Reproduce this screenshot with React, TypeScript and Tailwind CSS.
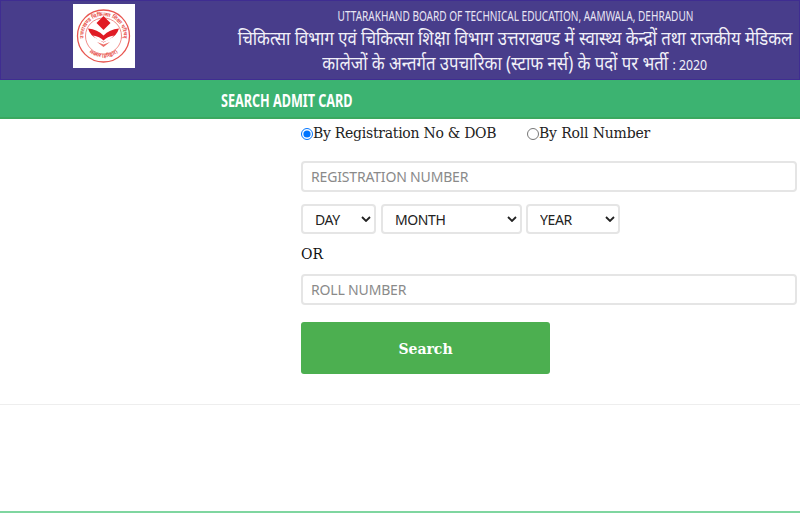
export default function App() {
  const serif = "font-['DejaVu_Serif',serif]";
  return (
    <div className="w-[800px] h-[517px] overflow-hidden bg-white font-['Noto_Sans',sans-serif]">
      <header className="h-[80px] flex bg-[#483d8b] border border-[#3f2d91] pl-[72px]">
        <div className="w-[62px] h-[64px] mt-[3px] bg-white shrink-0 flex items-center justify-center">
          <svg viewBox="0 0 62 64" className="w-[62px] h-[64px]">
            <circle cx="30.5" cy="32" r="26" fill="none" stroke="#e8554f" strokeWidth="1.3" />
            <circle cx="30.5" cy="32" r="18" fill="none" stroke="#ec6f69" strokeWidth="0.8" />
            <defs>
              <path id="logo-top" d="M14.100 43.500A20 20 0 1 1 46.900 43.500" />
              <path id="logo-bottom" d="M15 47a22 22 0 0 0 31 0" />
            </defs>
            <text fontSize="5.200" fill="#e8554f" fontWeight="700" textAnchor="middle">
              <textPath href="#logo-top" startOffset="50%">उत्तराखण्ड चिकित्सा शिक्षा परिषद्</textPath>
            </text>
            <text fontSize="5" fill="#e8554f" fontWeight="700" textAnchor="middle">
              <textPath href="#logo-bottom" startOffset="50%">लक्सर (हरिद्वार)</textPath>
            </text>
            <path d="M30.5 12l7 7-7 7-7-7z" fill="#e01b24" />
            <path d="M15 24.500c6.500 .5 11.500 3 15.500 7 4-4 9-6.500 15.500-7-1.500 5-5 8.500-9.500 10.500l-6 3.500-6-3.500c-4.500-2-8-5.500-9.500-10.500z" fill="#e01b24" />
            <path d="M20 31.500c4.500 .5 8 2.500 10.500 5 2.500-2.500 6-4.500 10.500-5-3 3.500-6.500 5.500-10.500 6.500-4-1-7.500-3-10.500-6.500z" fill="#fff" />
            <path d="M24 38l6.500 2.500 6.500-2.500-6.500 5z" fill="#ec6f69" />
          </svg>
        </div>
        <div className="flex-1 min-w-0 flex flex-col items-center pl-[96px] text-white">
          <div className="h-[22px] mt-[3px] text-[15px] leading-[22px] whitespace-nowrap scale-x-[0.67] text-[#e8e6f4]">
            UTTARAKHAND BOARD OF TECHNICAL EDUCATION, AAMWALA, DEHRADUN
          </div>
          <div className="h-[25px] text-[19px] leading-[25px] whitespace-nowrap scale-x-[0.88] text-[#f1f0f8]">
            चिकित्सा विभाग एवं चिकित्सा शिक्षा विभाग उत्तराखण्ड में स्वास्थ्य केन्द्रों तथा राजकीय मेडिकल
          </div>
          <div className="h-[24px] text-[19px] leading-[24px] whitespace-nowrap scale-x-[0.88] text-[#f1f0f8]">
            कालेजों के अन्तर्गत उपचारिका (स्टाफ नर्स) के पदों पर भर्ती <span className="text-[14px]">: 2020</span>
          </div>
        </div>
      </header>
      <div className="h-[39px] bg-[#3cb371] border-b-2 border-[#3aa85f] pl-[221px] flex items-center pt-[3px]">
        <span className="text-[18px] font-bold text-white whitespace-nowrap origin-left scale-x-[0.7]">SEARCH ADMIT CARD</span>
      </div>
      <main className="h-[286px] border-b border-[#eeeeee] pl-[301px] pr-[3px]">
        <div className={`flex items-center h-[28px] pt-[1px] text-[14px] text-[#222] ${serif}`}>
          <label className="flex items-center w-[226px]">
            <input type="radio" name="m" defaultChecked className="w-[12px] h-[12px] m-0 accent-[#0075ff]" />
            <span className="tracking-[-0.27px]">By Registration No &amp; DOB</span>
          </label>
          <label className="flex items-center">
            <input type="radio" name="m" className="w-[12px] h-[12px] m-0" />
            <span className="tracking-[-0.17px]">By Roll Number</span>
          </label>
        </div>
        <input
          placeholder="REGISTRATION NUMBER"
          className="block mt-[14px] w-full h-[31px] px-[8px] rounded-[4px] border-2 border-[#e5e5e5] text-[14px] tracking-[-0.17px] font-['Noto_Sans',sans-serif] placeholder:text-[#8a8a8a] outline-none"
        />
        <div className="flex mt-[12px] h-[30px]">
          <Sel label="DAY" cls="w-[75px] mr-[5px]" />
          <Sel label="MONTH" cls="w-[141px] mr-[4px]" />
          <Sel label="YEAR" cls="w-[94px]" />
        </div>
        <div className={`mt-[9px] h-[21px] leading-[23px] text-[14px] text-[#111] ${serif}`}>OR</div>
        <input
          placeholder="ROLL NUMBER"
          className="block mt-[10px] w-full h-[31px] px-[8px] rounded-[4px] border-2 border-[#e5e5e5] text-[14px] tracking-[-0.17px] font-['Noto_Sans',sans-serif] placeholder:text-[#8a8a8a] outline-none"
        />
        <button className={`block mt-[17px] w-[249px] h-[52px] pt-[2px] rounded-[3px] bg-[#4caf50] text-white text-[14px] font-bold ${serif}`}>
          Search
        </button>
      </main>
      <div className="h-[108px] border-b-2 border-[#7fd6a0]" />
    </div>
  );
}

function Sel({ label, cls }: { label: string; cls: string }) {
  return (
    <div className={`${cls} relative`}>
      <select className="w-full h-full appearance-none pl-[12px] bg-white rounded-[4px] border-2 border-[#e5e5e5] text-[14px] tracking-[-0.4px] text-[#222] outline-none">
        <option>{label}</option>
      </select>
      <svg viewBox="0 0 10 6" className="absolute right-[5px] top-[12px] w-[10px] h-[6px] pointer-events-none">
        <path d="M1 1l4 4 4-4" fill="none" stroke="#222" strokeWidth="1.8" />
      </svg>
    </div>
  );
}
